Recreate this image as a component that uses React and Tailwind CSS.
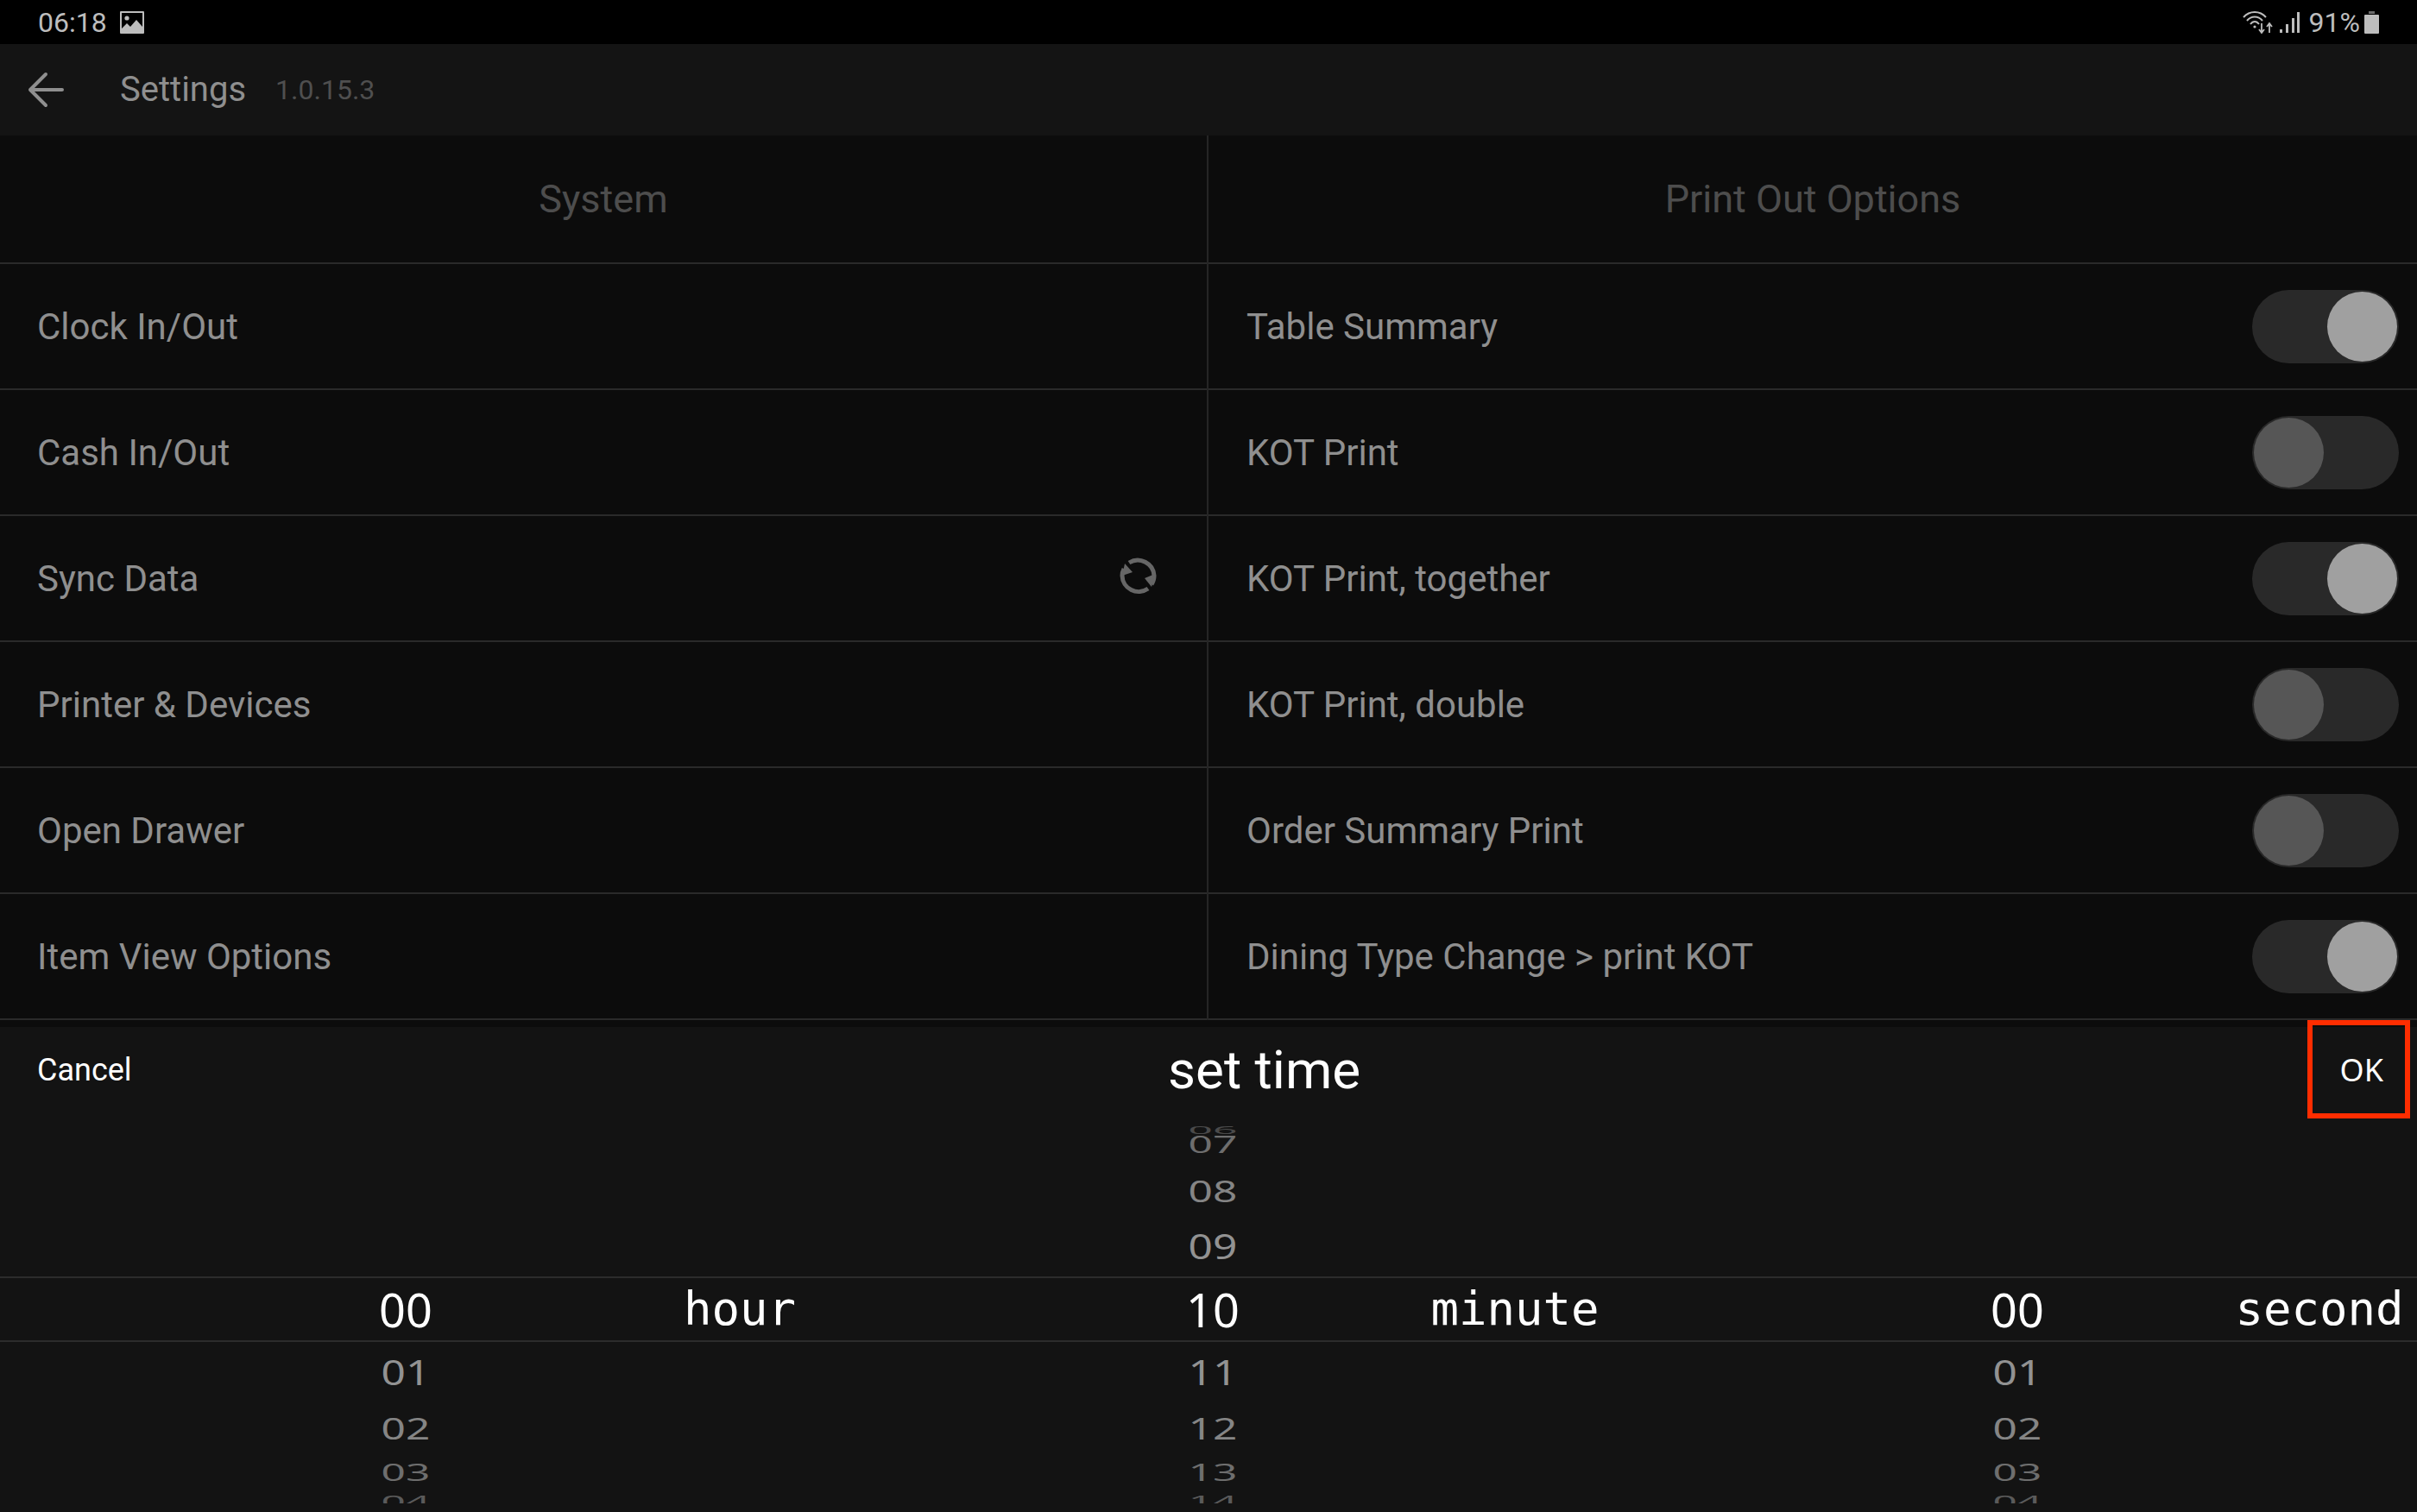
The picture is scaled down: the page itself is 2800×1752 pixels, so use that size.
import React from 'react';

const roboto = "font-['Roboto',sans-serif]";

const leftRows = ['Clock In/Out', 'Cash In/Out', 'Sync Data', 'Printer & Devices', 'Open Drawer', 'Item View Options'];
const rightRows = [
  { label: 'Table Summary', on: true },
  { label: 'KOT Print', on: false },
  { label: 'KOT Print, together', on: true },
  { label: 'KOT Print, double', on: false },
  { label: 'Order Summary Print', on: false },
  { label: 'Dining Type Change > print KOT', on: true },
];

const wheelAbove = [
  { h: 'h-[12px]', cls: 'scale-y-[0.33] scale-x-[1.24] text-[#4a4a4a]', vals: [null, '06', null] },
  { h: 'h-[50px]', cls: 'scale-y-[0.66] scale-x-[1.24] text-[#6e6e6e]', vals: [null, '07', null] },
  { h: 'h-[58px]', cls: 'scale-y-[0.86] scale-x-[1.24] text-[#858585]', vals: [null, '08', null] },
  { h: 'h-[70px]', cls: 'scale-y-100 scale-x-[1.24] text-[#929292]', vals: [null, '09', null] },
];
const wheelBelow = [
  { h: 'h-[70px]', cls: 'scale-y-100 scale-x-[1.24] text-[#929292]', vals: ['01', '11', '01'] },
  { h: 'h-[60px]', cls: 'scale-y-[0.86] scale-x-[1.24] text-[#858585]', vals: ['02', '12', '02'] },
  { h: 'h-[42px]', cls: 'scale-y-[0.66] scale-x-[1.24] text-[#6e6e6e]', vals: ['03', '13', '03'] },
];

function WheelRow({ h, cls, vals }) {
  return (
    <div className={`grid grid-cols-[340px_260px_600px_410px_490px_474px_226px] items-center ${h}`}>
      <div />
      <div className={`text-center text-[40px] leading-none ${cls}`}>{vals[0]}</div>
      <div />
      <div className={`text-center text-[40px] leading-none ${cls}`}>{vals[1]}</div>
      <div />
      <div className={`text-center text-[40px] leading-none ${cls}`}>{vals[2]}</div>
      <div />
    </div>
  );
}

function Toggle({ on }) {
  return (
    <div className={`w-[170px] h-[85px] rounded-full bg-[#292929] flex items-center px-[2px] ${on ? 'justify-end' : 'justify-start'}`}>
      <div className={`w-[81px] h-[81px] rounded-full ${on ? 'bg-[#a0a0a0]' : 'bg-[#565656]'}`} />
    </div>
  );
}

function StatusBar() {
  return (
    <div className={`h-[51px] bg-black flex items-center justify-between pl-[44px] pr-[44px] text-[#bdbdbd] text-[32px] ${roboto}`}>
      <div className="flex items-center gap-[15px]">
        <span>06:18</span>
        <svg width="28" height="26" viewBox="0 0 28 26">
          <path fill="#bdbdbd" fillRule="evenodd" d="M1 0h26a1 1 0 0 1 1 1v24a1 1 0 0 1-1 1H1a1 1 0 0 1-1-1V1a1 1 0 0 1 1-1zM2 2v18l6-6 4 4 7-8 7 8V2z" />
          <circle cx="8" cy="8" r="2.6" fill="#bdbdbd" />
        </svg>
      </div>
      <div className="flex items-center">
        <svg width="36" height="28" viewBox="0 0 36 28" fill="none" stroke="#bdbdbd" strokeWidth="2">
          <path d="M1 8C8 0 20 0 27 8" />
          <path d="M5 12C10 6 18 6 23 12" />
          <path d="M9 16C12 12 16 12 19 16" />
          <circle cx="14" cy="19" r="1.6" fill="#bdbdbd" stroke="none" />
          <path d="M22 15v10M19 22l3 4 3-4" strokeWidth="1.8" />
          <path d="M31 26V16M28 19l3-4 3 4" strokeWidth="1.8" />
        </svg>
        <svg className="ml-[7px]" width="24" height="26" viewBox="0 0 24 26" fill="#bdbdbd">
          <rect x="0" y="21" width="3" height="4" />
          <rect x="7" y="15" width="3" height="10" />
          <rect x="14" y="8" width="3" height="17" />
          <rect x="20" y="1" width="3" height="24" />
        </svg>
        <span className="ml-[10px]">91%</span>
        <svg className="ml-[5px]" width="17" height="26" viewBox="0 0 17 26" fill="#bdbdbd">
          <rect x="5" y="0" width="7" height="3" fill="#6a6a6a" />
          <rect x="0" y="4" width="17" height="22" rx="1" />
        </svg>
      </div>
    </div>
  );
}

export default function App() {
  return (
    <div className={`relative w-[2800px] h-[1752px] overflow-hidden bg-[#0c0c0c] flex flex-col ${roboto}`}>
      <StatusBar />

      <div className="h-[106px] bg-[#141414] flex items-center pl-[32px]">
        <svg width="42" height="42" viewBox="0 0 42 42" fill="none" stroke="#8f8f8f" strokeWidth="4" strokeLinecap="round" strokeLinejoin="round">
          <path d="M40 21H3M21 3 3 21l18 18" />
        </svg>
        <span className="ml-[65px] text-[40px] text-[#8f8f8f]">Settings</span>
        <span className="ml-[34px] text-[32px] text-[#4f4f4f]">1.0.15.3</span>
      </div>

      <div className="grid grid-cols-[1400px_1400px]">
        <div className="border-r-2 border-[#252525]">
          <div className="h-[149px] flex items-center justify-center text-[45px] text-[#4d4d4d] border-b-2 border-[#2a2a2a]">System</div>
          {leftRows.map((label) => (
            <div key={label} className="h-[146px] flex items-center justify-between pl-[43px] pr-[56px] text-[42px] text-[#8f8f8f] border-b-2 border-[#2a2a2a]">
              <span>{label}</span>
              {label === 'Sync Data' && (
                <svg className="-translate-y-[3px]" width="46" height="46" viewBox="0 0 46 46" fill="none" stroke="#666666" strokeWidth="5">
                  <path d="M12 8A19 19 0 0 1 41 23c0 4-1 7-3 10" />
                  <path d="M34 38A19 19 0 0 1 4 23c0-3 1-6 2-8" />
                  <path d="M7 9l-3 14 12-4z" fill="#666666" stroke="none" />
                  <path d="M38 36l4-15-12 5z" fill="#666666" stroke="none" />
                </svg>
              )}
            </div>
          ))}
        </div>
        <div>
          <div className="h-[149px] flex items-center justify-center text-[45px] text-[#4d4d4d] border-b-2 border-[#2a2a2a]">Print Out Options</div>
          {rightRows.map((row) => (
            <div key={row.label} className="h-[146px] flex items-center justify-between pl-[44px] pr-[21px] text-[42px] text-[#8f8f8f] border-b-2 border-[#2a2a2a]">
              <span>{row.label}</span>
              <Toggle on={row.on} />
            </div>
          ))}
        </div>
      </div>

      <div className="mt-[8px] flex-1 bg-[#131313] flex flex-col overflow-hidden">
        <div className="h-[99px] flex items-center justify-between pl-[43px] pr-[39px]">
          <span className="text-[36px] text-white">Cancel</span>
          <span className="text-[62px] text-white translate-x-[33px]">set time</span>
          <span className="text-[36px] text-white font-['Noto_Sans',sans-serif]">OK</span>
        </div>

        <div className="font-['Noto_Sans',sans-serif]">
          {wheelAbove.map((r) => <WheelRow key={r.vals[1]} {...r} />)}
          <div className="h-[76px] border-y-2 border-[#2c2c2c] text-white grid grid-cols-[340px_260px_514px_86px_410px_290px_200px_474px_226px] items-center">
            <div />
            <div className="text-center text-[54px] leading-none">00</div>
            <div className="text-center text-[54px] leading-none font-['DejaVu_Sans_Mono',monospace] col-span-1">hour</div>
            <div />
            <div className="text-center text-[54px] leading-none">10</div>
            <div className="text-center text-[54px] leading-none font-['DejaVu_Sans_Mono',monospace] whitespace-nowrap flex justify-center">minute</div>
            <div />
            <div className="text-center text-[54px] leading-none">00</div>
            <div className="text-center text-[54px] leading-none font-['DejaVu_Sans_Mono',monospace] whitespace-nowrap flex justify-center">second</div>
          </div>
          {wheelBelow.map((r) => <WheelRow key={r.vals[1]} {...r} />)}
          <div className="h-[15px] overflow-hidden">
            <div className="translate-y-[-8px]">
              <WheelRow h="h-[30px]" cls="scale-y-[0.5] scale-x-[1.24] text-[#5a5a5a]" vals={['04', '14', '04']} />
            </div>
          </div>
        </div>
      </div>

      {/* red highlight around OK */}
      <div className="absolute left-[2673px] top-[1182px] w-[119px] h-[114px] border-[6px] border-[#ff2d00]" />
    </div>
  );
}
